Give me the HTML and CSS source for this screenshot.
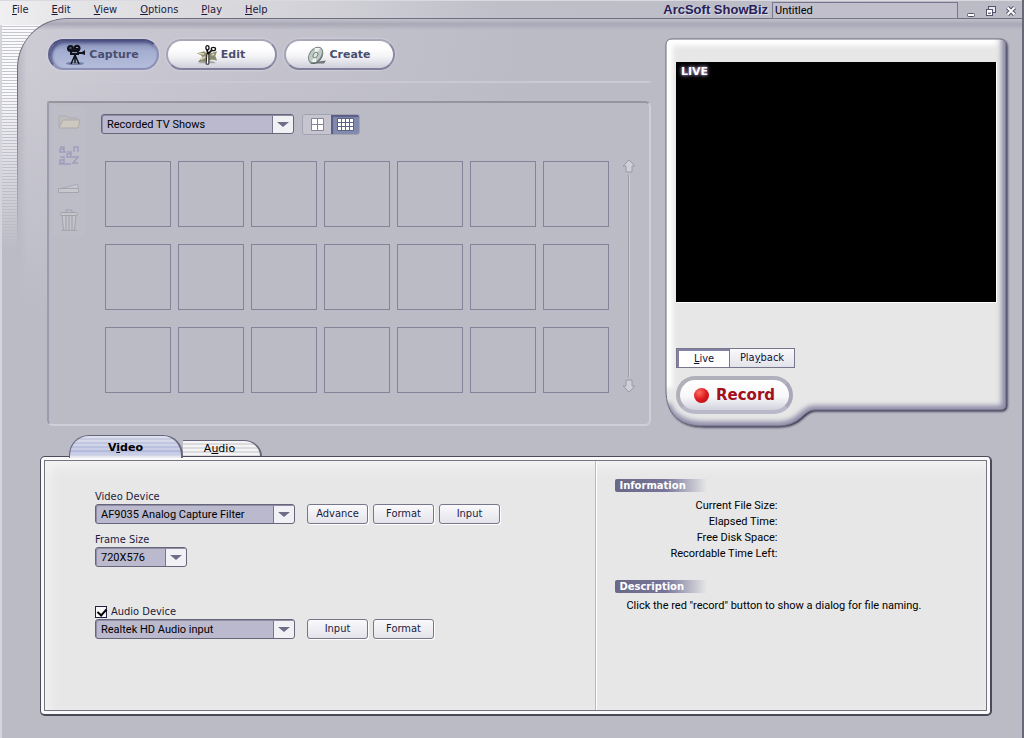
FILE: index.html
```html
<!DOCTYPE html>
<html lang="en">
<head>
<meta charset="utf-8">
<title>ArcSoft ShowBiz</title>
<link rel="stylesheet" href="styles.css">
</head>
<body>
<div class="app">
  <header class="titlebar">
    <nav class="menu" aria-label="Main menu">
      <a href="#file"><u>F</u>ile</a>
      <a href="#edit"><u>E</u>dit</a>
      <a href="#view"><u>V</u>iew</a>
      <a href="#options"><u>O</u>ptions</a>
      <a href="#play"><u>P</u>lay</a>
      <a href="#help"><u>H</u>elp</a>
    </nav>
    <label class="brand" for="project">ArcSoft ShowBiz</label>
    <input class="project" id="project" type="text" value="Untitled">
    <div class="window-controls">
      <button type="button" aria-label="Minimize"><svg width="12" height="12" viewBox="0 0 12 12"><rect x="2.5" y="8.5" width="7" height="3" rx="1" fill="#fff" stroke="#55546c"/></svg></button>
      <button type="button" aria-label="Restore"><svg width="12" height="12" viewBox="0 0 12 12"><rect x="3.5" y="1.5" width="7" height="6" fill="#e8e8ef" stroke="#55546c"/><rect x="1.5" y="4.500" width="6" height="6" fill="#fff" stroke="#55546c"/><path d="M3 7.500h3v1.500H3z" fill="#77768c"/></svg></button>
      <button type="button" aria-label="Close"><svg width="12" height="12" viewBox="0 0 12 12"><path d="M2.500 2.500l7 7m0-7l-7 7" stroke="#55546c" stroke-width="4.200"/><path d="M2.500 2.500l7 7m0-7l-7 7" stroke="#fff" stroke-width="2"/></svg></button>
    </div>
  </header>

  <main class="workspace">
    <div class="upper">
      <section class="capture">
        <nav class="modes" aria-label="Mode">
          <button type="button" class="mode mode-active" aria-pressed="true">
            <svg width="20" height="22" viewBox="0 0 20 22"><ellipse cx="9" cy="19.500" rx="9" ry="1.600" fill="#7680a4"/><circle cx="4.500" cy="4.500" r="3.500" fill="#11131c"/><circle cx="11" cy="4.200" r="3.500" fill="#11131c"/><path d="M4 6h9v5H4zM13 8h3l3-2v5l-3-1h-3z" fill="#11131c"/><path d="M9 11L5 20M9 11l4 9M9 12v7" stroke="#11131c" stroke-width="1.500"/><path d="M3.500 4h2M10 3.500h2M6 8.500h5" stroke="#8e96b8"/></svg>
            <span>Capture</span>
          </button>
          <button type="button" class="mode">
            <svg width="22" height="22" viewBox="0 0 24 22"><path d="M2 20h20l-3-2-9-1z" fill="#a5a5a9"/><path d="M1 9l8-2 3 3 4-1 7-2-2 5 2 5-6-1-4 2-5 0-6 1 5-6-2-2z" fill="#8b8a6c"/><path d="M3 9l6 1M5 16l5-3M17 11l3-1" stroke="#d6d4b4" stroke-width="2"/><path d="M12 9l-1 12h3V9z" fill="#fff" stroke="#111"/><path d="M13 10L12 5M13 10l4-4" stroke="#111" stroke-width="2"/><ellipse cx="12.500" cy="3" rx="1.700" ry="2.300" fill="#fff" stroke="#111" stroke-width="1.400"/><ellipse cx="19" cy="4.500" rx="2.300" ry="1.800" fill="#fff" stroke="#111" stroke-width="1.400"/></svg>
            <span>Edit</span>
          </button>
          <button type="button" class="mode">
            <svg width="20" height="20" viewBox="0 0 20 20"><path d="M3 18.500h15l2-3-7 1z" fill="#6f7577"/><g transform="rotate(38 9.500 10)"><ellipse cx="10.500" cy="10.500" rx="6" ry="9" fill="#596663"/><ellipse cx="9.500" cy="10" rx="5.800" ry="8.800" fill="#bfcbc4" stroke="#7a8582"/><path d="M9.500 10L4.500 5 9 1.600zM9.500 10l5 5-4 3z" fill="#edf3ee"/><ellipse cx="9.500" cy="10" rx="2" ry="3" fill="#dfe7e2" stroke="#78847f"/></g></svg>
            <span>Create</span>
          </button>
        </nav>

        <div class="library">
          <div class="library-cap"></div>
          <div class="library-body">
            <div class="tools">
              <button type="button" aria-label="Open folder"><svg width="26" height="20" viewBox="0 0 26 20"><path d="M3 15V4h7l2 2h9v9z" fill="#c2bfbc" stroke="#aaa7ad"/><path d="M3 16L7 8h17l-2 8z" fill="#d2cdbf" stroke="#aaa6a4"/></svg></button>
              <button type="button" aria-label="Sort by name"><svg width="22" height="20" viewBox="0 0 22 20" fill="none" stroke="#9a96bb" stroke-width="1.500"><path d="M2 2h4v5H2V4h4M9 7h4v5H9V9h4M16 7V2h4v5M2 12h4v6H2v-3h4M15 12h5l-5 6h5M6 7h2M14 12h2M1 19h12"/></svg></button>
              <button type="button" aria-label="Scan"><svg width="26" height="16" viewBox="0 0 26 16"><path d="M3 9L22 4v5z" fill="#c9c9d1" stroke="#a5a4b0"/><path d="M2.500 8.500h20v4h-20z" fill="#cbcbd1" stroke="#a09fac"/></svg></button>
              <button type="button" aria-label="Delete"><svg width="22" height="24" viewBox="0 0 22 24"><path d="M4 6h14l-1.500 15h-11z" fill="#c8c8ce" stroke="#9d9ca8"/><path d="M8 7v13M11 7v13M14 7v13" stroke="#9695a0"/><rect x="2.500" y="3.500" width="17" height="3" rx="1" fill="#c8c8ce" stroke="#9d9ca8"/><path d="M8 3V1h6v2" fill="none" stroke="#9d9ca8"/><path d="M3 21.500h16" stroke="#a4a3ad"/></svg></button>
            </div>
            <div class="browser">
              <div class="filter">
                <span class="dropdown dropdown-wide"><select aria-label="Album"><option>Recorded TV Shows</option></select></span>
                <div class="views">
                  <button type="button" aria-label="Large thumbnails"><svg width="13" height="13" viewBox="0 0 13 13"><path d="M.5 .5h12v12H.5zM6.500 .5v12M.5 6.500h12" fill="#fff" stroke="#85849a"/></svg></button>
                  <button type="button" class="view-active" aria-label="Small thumbnails" aria-pressed="true"><svg width="17" height="13" viewBox="0 0 17 13"><path d="M.5 .5h16v12H.5z" fill="#fff" stroke="#5b6486"/><path d="M4.500 0v13M8.500 0v13M12.500 0v13M0 4.500h17M0 8.500h17" stroke="#5b6486"/></svg></button>
                </div>
              </div>
              <div class="shelf">
                <div class="thumbs">
                  <div></div><div></div><div></div><div></div><div></div><div></div><div></div>
                  <div></div><div></div><div></div><div></div><div></div><div></div><div></div>
                  <div></div><div></div><div></div><div></div><div></div><div></div><div></div>
                </div>
                <div class="scroller">
                  <button type="button" aria-label="Scroll up"><svg width="14" height="14" viewBox="0 0 14 14"><path d="M7 1l6 6h-3v6H4V7H1z" fill="#cfcfd8" stroke="#9a99aa"/></svg></button>
                  <i></i>
                  <button type="button" aria-label="Scroll down"><svg width="14" height="14" viewBox="0 0 14 14"><path d="M7 13L1 7h3V1h6v6h3z" fill="#cfcfd8" stroke="#9a99aa"/></svg></button>
                </div>
              </div>
            </div>
          </div>
        </div>
      </section>

      <section class="preview">
        <svg class="preview-shell" width="348" height="394" viewBox="0 0 348 394" aria-hidden="true">
          <defs>
            <path id="shell" d="M7 1H335Q341 1 341 7V366Q341 372 335 372H150C137 372 137 388 112 388H38C14 388 1 376 1 352V7Q1 1 7 1z"/>
            <clipPath id="shell-clip"><use href="#shell"/></clipPath>
            <filter id="soft" x="-10%" y="-10%" width="120%" height="120%"><feGaussianBlur stdDeviation="2.500"/></filter>
            <filter id="drop" x="-10%" y="-10%" width="120%" height="120%"><feGaussianBlur stdDeviation="1"/></filter>
          </defs>
          <use href="#shell" fill="#2f2d44" transform="translate(1.500 1.500)" filter="url(#drop)"/>
          <use href="#shell" fill="#e7e7e7"/>
          <g clip-path="url(#shell-clip)">
            <path d="M341 -5V366Q341 372 335 372H150C137 372 137 388 112 388H38C14 388 4 376 1 366" fill="none" stroke="#8d8ba8" stroke-width="9" filter="url(#soft)"/>
            <path d="M2 350V2H332" fill="none" stroke="#fff" stroke-width="11" filter="url(#soft)"/>
          </g>
          <use href="#shell" fill="none" stroke="#6d6c80"/>
        </svg>
        <div class="screen"><span class="live-tag">LIVE</span></div>
        <div class="source">
          <button type="button" class="source-active" aria-pressed="true"><span><u>L</u>ive</span></button>
          <button type="button"><span>Pla<u>y</u>back</span></button>
        </div>
        <button type="button" class="record"><i></i><span>Record</span></button>
      </section>
    </div>

    <section class="settings">
      <div class="tabs" role="tablist">
        <button type="button" role="tab" class="tab tab-active" aria-selected="true"><span>V<u>i</u>deo</span></button>
        <button type="button" role="tab" class="tab" aria-selected="false"><span>A<u>u</u>dio</span></button>
      </div>
      <div class="panel">
        <form class="panel-inner">
          <div class="devices">
            <div class="field">
              <label for="video-device">Video Device</label>
              <div class="row">
                <span class="dropdown dropdown-device"><select id="video-device"><option>AF9035 Analog Capture Filter</option></select></span>
                <div class="actions"><button type="button">Advance</button><button type="button">Format</button><button type="button">Input</button></div>
              </div>
            </div>
            <div class="field">
              <label for="frame-size">Frame Size</label>
              <div class="row"><span class="dropdown dropdown-size"><select id="frame-size"><option>720X576</option></select></span></div>
            </div>
            <div class="field field-audio">
              <label class="check"><input type="checkbox" checked><span>Audio Device</span></label>
              <div class="row">
                <span class="dropdown dropdown-device"><select aria-label="Audio Device"><option>Realtek HD Audio input</option></select></span>
                <div class="actions"><button type="button">Input</button><button type="button">Format</button></div>
              </div>
            </div>
          </div>
          <div class="details">
            <h2>Information</h2>
            <ul class="facts">
              <li>Current File Size:</li>
              <li>Elapsed Time:</li>
              <li>Free Disk Space:</li>
              <li>Recordable Time Left:</li>
            </ul>
            <h2>Description</h2>
            <p>Click the red "record" button to show a dialog for file naming.</p>
          </div>
        </form>
      </div>
    </section>
  </main>
</div>
</body>
</html>
```
FILE: styles.css
```css
:root {
  --ui: Roboto, "DejaVu Sans Condensed", sans-serif;
  --label: "DejaVu Sans Condensed", "DejaVu Sans", sans-serif;
  --wide: "DejaVu Sans", sans-serif;
  --base: #bbbbc6;
  --ink: #1c1a3c;
}
* { box-sizing: border-box; }
body { margin: 0; font: 11px/16px var(--ui); color: #000; background: var(--base); }
button, input, select { font: inherit; color: inherit; margin: 0; }
button { padding: 0; border: 0; background: none; display: flex; align-items: center; justify-content: center; }
u { text-underline-offset: 1px; }

.app {
  min-height: 100vh;
  border-right: 2px solid #696778;
  background:
    linear-gradient(#d9d9df, #d9d9df) 0 0 / 100% 1px no-repeat,
    linear-gradient(90deg, #f0f0f3, #e6e6e8 60px, #d0d0d6 330px, #bfbfca 500px, #bbbbc6) 0 0 / 100% 25px no-repeat,
    linear-gradient(90deg, #d4d4dc 0 2px, transparent 2px),
    linear-gradient(#bbbbc600 90px, var(--base) 250px),
    repeating-linear-gradient(#fafafb 0 2px, #c6c6d0 2px 3px);
}

/* Title bar */
.titlebar { position: relative; z-index: 1; display: flex; height: 18px; }
.menu { display: flex; gap: 23px; padding-left: 12px; font-family: var(--label); line-height: 20px; flex: 1; }
.menu a { color: var(--ink); text-decoration: none; }
.brand { font: bold 13px/20px "Liberation Sans", sans-serif; color: #26215a; text-shadow: 1px 1px 0 #dddde6; margin-right: 4px; }
.project { width: 186px; height: 17px; margin-top: 2px; padding: 0 2px; border: 1px solid #77768c; background: #c0bfcb; }
.window-controls { display: flex; gap: 8px; padding: 5px 5px 0 7px; width: 64px; }
.window-controls button { width: 12px; height: 12px; }

/* Main surface */
.workspace {
  position: relative;
  margin-left: 17px;
  padding-bottom: 23px;
  border-top-left-radius: 50px;
  background:
    linear-gradient(#c6c5cf, #a9a8b6 6px, #bbbbc600 12px),
    linear-gradient(#bbbbc600 50px, var(--base) 300px),
    linear-gradient(90deg, #a9a8b6aa, #a9a8b600 10px),
    linear-gradient(100deg, #cdccd5, #c3c2cd 250px, #bbbbc6 520px);
}
.workspace::before {
  content: "";
  position: absolute;
  inset: 0;
  border: solid #6d6c80;
  border-width: 1px 0 0 1px;
  border-top-left-radius: 50px;
  mask-image: linear-gradient(#000 60px, transparent 220px);
  pointer-events: none;
}
.upper { display: flex; gap: 15px; padding: 21px 14px 0 28px; position: relative; }
.capture { flex: 1; }

.modes { display: flex; gap: 7px; padding-left: 3px; }
.mode {
  gap: 3px;
  width: 111px;
  height: 31px;
  padding-right: 2px;
  border: 2px solid #9190a8;
  border-color: #a9a8b9 #8c8ba5 #807f9c #a5a4b6;
  border-radius: 16px;
  background: linear-gradient(#fff 25%, #f5f5f8 55%, #cfcfdb);
  box-shadow: 0 0 2px #e6e6ee;
  font: bold 11px/16px var(--wide);
  color: #4a4f70;
}
.mode-active {
  background: linear-gradient(#7f88b2, #a3add0 35%, #b5bddb);
  border-color: #4b4f7d #8c90b4 #8c90b4 #5e628c;
  box-shadow: inset 2px 2px 3px #4f5586, 0 0 2px #e6e6ee;
}

.library { margin-top: 11px; }
.library-cap { height: 20px; border: solid #cac9d3; border-width: 2px 0 0 2px; border-radius: 12px 0 0 0; }
.library-body {
  display: flex;
  gap: 18px;
  margin-left: 2px;
  padding: 3px 13px 0 4px;
  min-height: 325px;
  background: var(--base);
  border: 2px solid;
  border-color: #96959f #cfced9 #cfced9 #9c9bab;
  border-radius: 2px 6px 6px 6px;
}
.tools { width: 30px; display: grid; gap: 1px; align-content: start; }
.tools button { width: 32px; height: 32px; background: #bebec9; opacity: .8; }
.browser { flex: 1; padding-top: 7px; }
.filter { display: flex; align-items: center; gap: 8px; height: 22px; }
.views { display: flex; border: 1px solid #a3a2b3; border-radius: 3px; overflow: hidden; }
.views button { width: 28px; height: 19px; background: #c5c4cf; }
.views .view-active { background: #8189ac; box-shadow: inset 2px 2px 1px #585e87; }
.shelf { display: flex; justify-content: space-between; padding: 26px 0 0 4px; }
.thumbs { display: grid; grid-template-columns: repeat(7, 66px); gap: 17px 7px; }
.thumbs div { height: 66px; border: 1px solid #84839c; }
.scroller { display: flex; flex-direction: column; align-items: center; width: 14px; margin-top: -2px; }
.scroller i { flex: 1; width: 2px; margin: 2px 0; border-left: 1px solid #9b9aab; border-right: 1px solid #cfced8; }

/* Drop-downs */
.dropdown { position: relative; display: block; height: 20px; }
.dropdown-wide { width: 193px; }
.dropdown-device { width: 200px; }
.dropdown-size { width: 92px; }
.dropdown select {
  appearance: none;
  display: block;
  width: 100%;
  height: 100%;
  padding: 1px 24px 0 5px;
  border: 1px solid #66657a;
  border-radius: 3px;
  box-shadow: inset 1px 1px 0 #8f8ea6;
  background: linear-gradient(90deg, #bbb9cd calc(100% - 21px), #77768a 0 calc(100% - 20px), #f1f1f5 0);
  color: #000;
}
.dropdown::after {
  content: "";
  position: absolute;
  right: 5px;
  top: 8px;
  border: solid transparent;
  border-width: 5px 6px 0;
  border-top-color: #6e6d88;
  pointer-events: none;
}

/* Preview */
.preview { position: relative; width: 342px; padding: 23px 12px 13px 10px; height: 388px; }
.preview-shell { position: absolute; left: -1px; top: -1px; }
.screen { position: relative; height: 240px; background: #000; box-shadow: 1px 1px 0 #fff; padding: 2px 5px; }
.live-tag { font: bold 11px/16px var(--wide); color: #fff; text-shadow: 0 0 3px #b79fd0, 0 0 5px #9a86b4; }
.source { position: relative; display: flex; margin-top: 46px; height: 20px; font-family: var(--label); }
.source button { width: 65px; border: 1px solid #77768c; border-left: 0; background: linear-gradient(#fafafc, #e2e2ea); color: #10103c; }
.source .source-active { width: 54px; border: 1px solid #77768c; background: #fff; box-shadow: inset 2px 2px 0 #8482a4; padding: 2px 0 0 2px; }
.record {
  position: relative;
  gap: 7px;
  width: 117px;
  height: 38px;
  margin-top: 8px;
  border: 4px solid #b5b4c3;
  border-color: #b0afbc #a9a8ba #b9b8c8 #b0afbc;
  border-radius: 19px;
  background: linear-gradient(#fff, #f8f8fa 55%, #d2d2de);
  font: bold 15px/20px var(--wide);
  color: #a1101c;
}
.record i { width: 15px; height: 15px; border-radius: 50%; background: radial-gradient(circle at 35% 30%, #ff6b62, #dd1b20 50%, #a80f14); }

/* Settings */
.settings { position: relative; padding: 8px 30px 0 23px; }
.tabs { display: flex; align-items: flex-end; height: 21px; padding-left: 29px; }
.tab {
  position: relative;
  width: 79px;
  height: 16px;
  padding-right: 4px;
  border: solid #66657a;
  border-width: 1px 2px 0 0;
  border-top-right-radius: 18px 16px;
  background: repeating-linear-gradient(#f4f4f5 0 2px, #dcdce0 2px 4px);
  font-family: var(--wide);
}
.tab-active {
  z-index: 1;
  width: 114px;
  height: 23px;
  margin-bottom: -2px;
  padding: 2px 0 0;
  border-left-width: 1px;
  border-radius: 20px 20px 0 0;
  background: linear-gradient(#d5d9ea99, #a9b1d899 75%, #eeeef4), repeating-linear-gradient(#eceef6 0 2px, #bfc4de 2px 4px);
  font-weight: bold;
}
.panel { padding: 3px; border: 1px solid #4b4a58; border-right-width: 2px; border-bottom-width: 2px; border-radius: 5px; background: #fafafa; }
.panel-inner {
  display: grid;
  grid-template-columns: 552fr 390fr;
  min-height: 251px;
  border: 1px solid #77767f;
  background: #e7e7e7;
  box-shadow: inset 4px 6px 12px #f4f4f4;
}
.devices { padding: 28px 0 0 50px; border-right: 1px solid #bbbac2; }
.field { margin-bottom: 8px; color: var(--ink); }
.field > label { display: block; height: 15px; line-height: 16px; font-family: var(--label); }
.field-audio { margin-top: 37px; }
.field > .check { display: flex; align-items: center; gap: 4px; height: 15px; }
.check input { appearance: none; width: 12px; height: 12px; border: 1px solid #222144; background: #f8f8fa; position: relative; }
.check input:checked::after { content: ""; position: absolute; left: 3px; top: 0; width: 4px; height: 7px; border: solid #000; border-width: 0 2px 2px 0; transform: rotate(42deg); }
.row { display: flex; gap: 12px; }
.actions { display: flex; gap: 5px; }
.actions button { width: 61px; height: 20px; border: 1px solid #77768a; border-radius: 3px; background: linear-gradient(#fafafc, #e3e3ea); box-shadow: 1px 1px 0 #fff; font-family: var(--label); }

.details { padding: 18px 18px 0; border-left: 1px solid #fff; }
.details h2 { width: 92px; height: 13px; margin: 0; padding-left: 4px; border-radius: 2px 0 0 2px; background: linear-gradient(90deg, #696887, #77769a 55%, #77769a00); color: #fff; font: bold 10px/13px var(--wide); }
.facts { list-style: none; width: 162px; margin: 6px 0 18px; padding: 0; text-align: right; }
.details p { margin: 5px 0 0; padding-left: 11px; }
```
